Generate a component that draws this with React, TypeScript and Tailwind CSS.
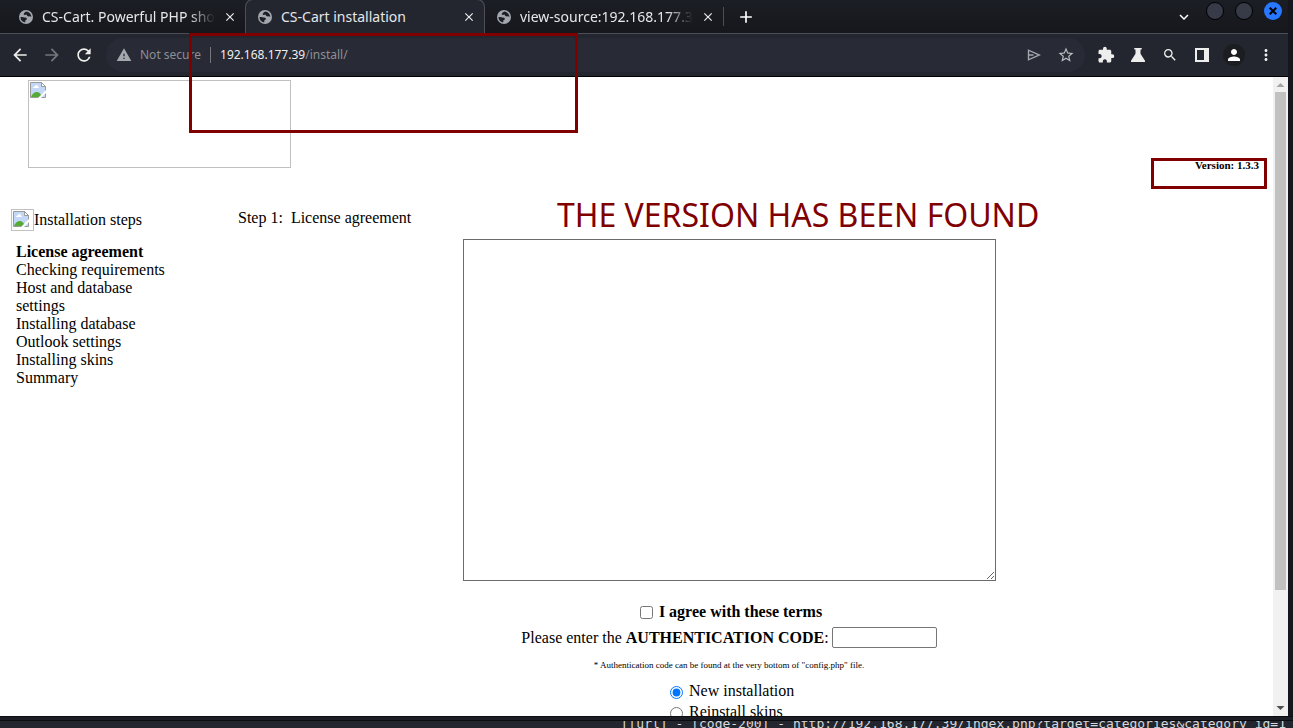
import type { ReactNode } from "react";
import {
  MdArrowBack,
  MdArrowForward,
  MdRefresh,
  MdWarning,
  MdClose,
  MdAdd,
  MdStarBorder,
  MdExtension,
  MdSearch,
  MdPerson,
  MdMoreVert,
  MdExpandMore,
} from "react-icons/md";

function Globe() {
  return (
    <svg viewBox="0 0 14 14" className="mx-px size-[14px] shrink-0">
      <circle cx="7" cy="7" r="7" fill="#a4a7ad" />
      <path
        d="M7.200 1.600 Q4.800 2.600 4.600 4.600 Q5.600 5.400 7.400 4.600 Q8 6.600 9.800 6.600 Q11.200 6 12.400 6.900 A5.500 5.500 0 0 0 7.200 1.600z"
        fill="#1d1f26"
      />
      <path
        d="M1.500 7 Q4 6.600 5.600 7.600 Q7.800 7.600 8 9 Q7.600 10 6.400 10.200 L6.200 12.400 A5.500 5.500 0 0 1 1.500 7z"
        fill="#1d1f26"
      />
    </svg>
  );
}

function Tab({ title, active = false }: { title: string; active?: boolean }) {
  return (
    <div
      className={
        active
          ? "flex h-[34px] w-[240px] shrink-0 items-center gap-2 rounded-t-lg border border-b-0 border-[#4c4f57] bg-[#23262f] pr-2 pl-[11px]"
          : "flex h-[33px] w-[238px] shrink-0 items-center gap-2 pr-2 pl-[11px]"
      }
    >
      <Globe />
      <span
        className={
          active
            ? "min-w-0 flex-1 overflow-hidden text-sm whitespace-nowrap text-[#e6e7e9]"
            : "min-w-0 flex-1 overflow-hidden mask-r-from-85% mask-r-to-100% text-sm whitespace-nowrap text-[#e6e7e9]"
        }
      >
        {title}
      </span>
      <button aria-label="Close tab" className="text-[#eeeeee]">
        <MdClose className="size-[14px]" />
      </button>
    </div>
  );
}

function ToolButton({ label, children }: { label: string; children: ReactNode }) {
  return (
    <button aria-label={label} className="flex size-8 items-center justify-center text-[#eeeeec]">
      {children}
    </button>
  );
}

function BrokenImage({ className }: { className: string }) {
  return (
    <div role="img" aria-label="Missing image" className={`border border-[#c0c0c0] p-px ${className}`}>
      <svg viewBox="0 0 16 16" className="size-4">
        <path d="M.5.5h11l4 4v11H.5z" fill="#c3d7f7" stroke="#9a9a9a" />
        <path d="M11.5.5v4h4z" fill="#fff" stroke="#9a9a9a" />
        <path d="M3 6q0-1.500 1.500-1.500Q5 3 6.500 3 8 3 8 4.500 9 4.500 9 6z" fill="#fff" />
        <path d="M1 15q2-5 6-5 3 0 5 5z" fill="#56ab35" />
        <path d="M16 8v3l-5 5H8z" fill="#fff" />
      </svg>
    </div>
  );
}

function BrowserBar() {
  return (
    <header className="relative font-['Noto_Sans','Open_Sans',sans-serif]">
      <div className="flex h-[34px] items-end border-b border-[#4c4f57] bg-linear-to-b from-[#1c1e25] to-[#15171c] pl-[7px]">
        <Tab title="CS-Cart. Powerful PHP shop" />
        <Tab title="CS-Cart installation" active />
        <Tab title="view-source:192.168.177.3" />
        <div className="mb-[7px] h-[19px] w-px bg-[#4c4f57]" />
        <button aria-label="New tab" className="flex h-[33px] w-11 items-center justify-center text-white">
          <MdAdd className="size-5" />
        </button>
        <button aria-label="Search tabs" className="ml-auto flex h-[33px] w-8 items-center justify-center text-white">
          <MdExpandMore className="size-[18px]" />
        </button>
        <div className="flex gap-[11px] self-start pt-[2px] pr-[6px] pl-[6px]">
          <button aria-label="Minimize" className="size-[18px] rounded-full border border-black bg-[#373b47]" />
          <button aria-label="Maximize" className="size-[18px] rounded-full border border-black bg-[#373b47]" />
          <button aria-label="Close window" className="flex size-[18px] items-center justify-center rounded-full bg-[#2777ff] text-black">
            <svg viewBox="0 0 8 8" className="size-2" fill="none" stroke="currentColor" strokeWidth="2">
              <path d="M.7.7l6.600 6.600M7.300.7L.7 7.300" />
            </svg>
          </button>
        </div>
      </div>
      <div className="flex h-[43px] items-center border-b border-black bg-[#23262f] pl-1">
        <ToolButton label="Back"><MdArrowBack className="size-5" /></ToolButton>
        <button aria-label="Forward" className="flex size-8 items-center justify-center text-[#75777c]">
          <MdArrowForward className="size-5" />
        </button>
        <ToolButton label="Reload"><MdRefresh className="size-5" /></ToolButton>
        <div className="ml-[6px] flex h-[34px] min-w-0 flex-1 items-center rounded-full bg-[#282a35] pr-[10px] pl-[10px] text-[12px] text-[#8d8f95]">
          <MdWarning className="size-4 shrink-0 text-[#a4a7ad]" />
          <span className="ml-2 whitespace-nowrap">Not secure</span>
          <span className="mr-[9px] ml-[9px] h-4 w-px bg-[#75777c]" />
          <div className="flex-1"><span className="text-[#eeeeec]">192.168.177.39</span>/install/</div>
          <button aria-label="Share">
            <svg viewBox="0 0 14 12" className="h-3 w-[14px]" fill="none" stroke="#a4a7ad" strokeWidth="1.400">
              <path d="M1.500 1.200v9.600L12.500 6zM1.500 6h5" />
            </svg>
          </button>
          <button aria-label="Bookmark" className="ml-4 text-[#b9bbbf]"><MdStarBorder className="size-[18px]" /></button>
        </div>
        <div className="flex pr-[6px] pl-[5px]">
          <ToolButton label="Extensions"><MdExtension className="size-[18px]" /></ToolButton>
          <ToolButton label="Labs">
            <svg viewBox="0 0 14 14" className="size-[14px]" fill="currentColor">
              <path d="M3.300 0h7.400v1.500H9.500v4.300L14 12.700V14H0v-1.300l4.500-6.900V1.500H3.300z" />
            </svg>
          </ToolButton>
          <ToolButton label="Search"><MdSearch className="size-4" /></ToolButton>
          <ToolButton label="Side panel">
            <svg viewBox="0 0 14 14" className="size-[14px]" fill="currentColor">
              <path d="M0 0h14v14H0zM2 2v10h7V2z" fillRule="evenodd" />
            </svg>
          </ToolButton>
          <ToolButton label="Profile">
            <span className="flex size-[22px] items-center justify-center rounded-full bg-[#1c1d20]">
              <MdPerson className="size-[18px] text-white" />
            </span>
          </ToolButton>
          <ToolButton label="Menu"><MdMoreVert className="size-[18px]" /></ToolButton>
        </div>
      </div>
      <div className="pointer-events-none absolute top-[33px] left-[189px] h-[100px] w-[389px] border-3 border-[#800000]" />
    </header>
  );
}

const steps = [
  "Checking requirements",
  "Host and database settings",
  "Installing database",
  "Outlook settings",
  "Installing skins",
  "Summary",
];

function InstallPage() {
  return (
    <div className="min-w-0 flex-1 overflow-hidden font-['Liberation_Serif',serif] text-base leading-[18px] text-black">
      <div className="flex items-start justify-between pt-[3px] pr-[6px] pl-7">
        <BrokenImage className="h-[88px] w-[263px]" />
        <div className="mt-[78px] h-[31px] w-[116px] border-3 border-[#800000] pr-[5px] text-right text-[11px] leading-[8px] font-bold">
          Version: 1.3.3
        </div>
      </div>
      <div className="mt-5 flex">
        <nav className="w-[185px] shrink-0 pl-[11px]">
          <div className="flex items-center">
            <BrokenImage className="h-[22px] w-[23px] shrink-0" />
            Installation steps
          </div>
          <ul className="mt-3 w-[160px] pl-[5px]">
            <li className="font-bold">License agreement</li>
            {steps.map((s) => (
              <li key={s}>{s}</li>
            ))}
          </ul>
        </nav>
        <main className="min-w-0 flex-1">
          <div className="relative pl-[53px]">
            Step 1:&nbsp; License agreement
            <div className="absolute -top-[14px] left-[372px] font-['Noto_Sans',sans-serif] text-[32px] leading-[40px] whitespace-nowrap text-[#800000]">
              THE VERSION HAS BEEN FOUND
            </div>
          </div>
          <form className="mt-3 flex flex-col items-center">
            <textarea aria-label="License agreement" className="h-[342px] w-[533px] resize border border-[#6b6b6b] bg-white" />
            <label className="mt-[22px] flex items-center pl-1 font-bold">
              <input type="checkbox" className="mr-[6px] size-[13px]" />
              I agree with these terms
            </label>
            <label className="mt-[6px] flex items-center gap-[3px]">
              <span>Please enter the <b>AUTHENTICATION CODE</b>:</span>
              <input type="text" className="h-[21px] w-[105px] rounded-xs border border-[#767676] bg-white px-1" />
            </label>
            <p className="mt-2 text-[9px]">* Authentication code can be found at the very bottom of "config.php" file.</p>
            <div className="mt-2 flex w-[118px] flex-col gap-[3px] whitespace-nowrap">
              <label className="flex items-center">
                <input type="radio" name="mode" defaultChecked className="mt-[3px] mr-[6px] size-[13px]" />
                New installation
              </label>
              <label className="flex items-center">
                <input type="radio" name="mode" className="mt-[3px] mr-[6px] size-[13px]" />
                Reinstall skins
              </label>
            </div>
          </form>
        </main>
      </div>
    </div>
  );
}

export default function App() {
  return (
    <div className="flex h-screen flex-col overflow-hidden bg-[#23262f]">
      <div className="flex min-h-0 flex-1 flex-col border-r-5 border-[#15171c]">
        <BrowserBar />
        <div className="flex min-h-0 flex-1 bg-white">
          <InstallPage />
          <div className="flex w-[15px] shrink-0 flex-col items-center justify-between bg-[#f1f1f1]">
            <svg viewBox="0 0 15 15" className="size-[15px] shrink-0"><path d="M3.500 10h8l-4-4z" fill="#a3a3a3" /></svg>
            <div className="mb-auto h-[78%] w-[11px] bg-[#c1c1c1]" />
            <svg viewBox="0 0 15 15" className="size-[15px] shrink-0"><path d="M3.500 5h8l-4 4z" fill="#505050" /></svg>
          </div>
        </div>
      </div>
      <div className="h-[5px] shrink-0 border-y border-[#0c0d10] bg-[#1b1e24]" />
      <div className="flex h-[7px] shrink-0 items-end justify-end overflow-hidden pr-[7px] font-['DejaVu_Sans_Mono',monospace] text-[13px] leading-[15px] whitespace-pre text-[#d6d8dc]">
        <span className="-mb-[3px]">{"[[url] - [code-200] - http://192.168.177.39/index.php?target=categories&category_id=1"}</span>
      </div>
    </div>
  );
}
